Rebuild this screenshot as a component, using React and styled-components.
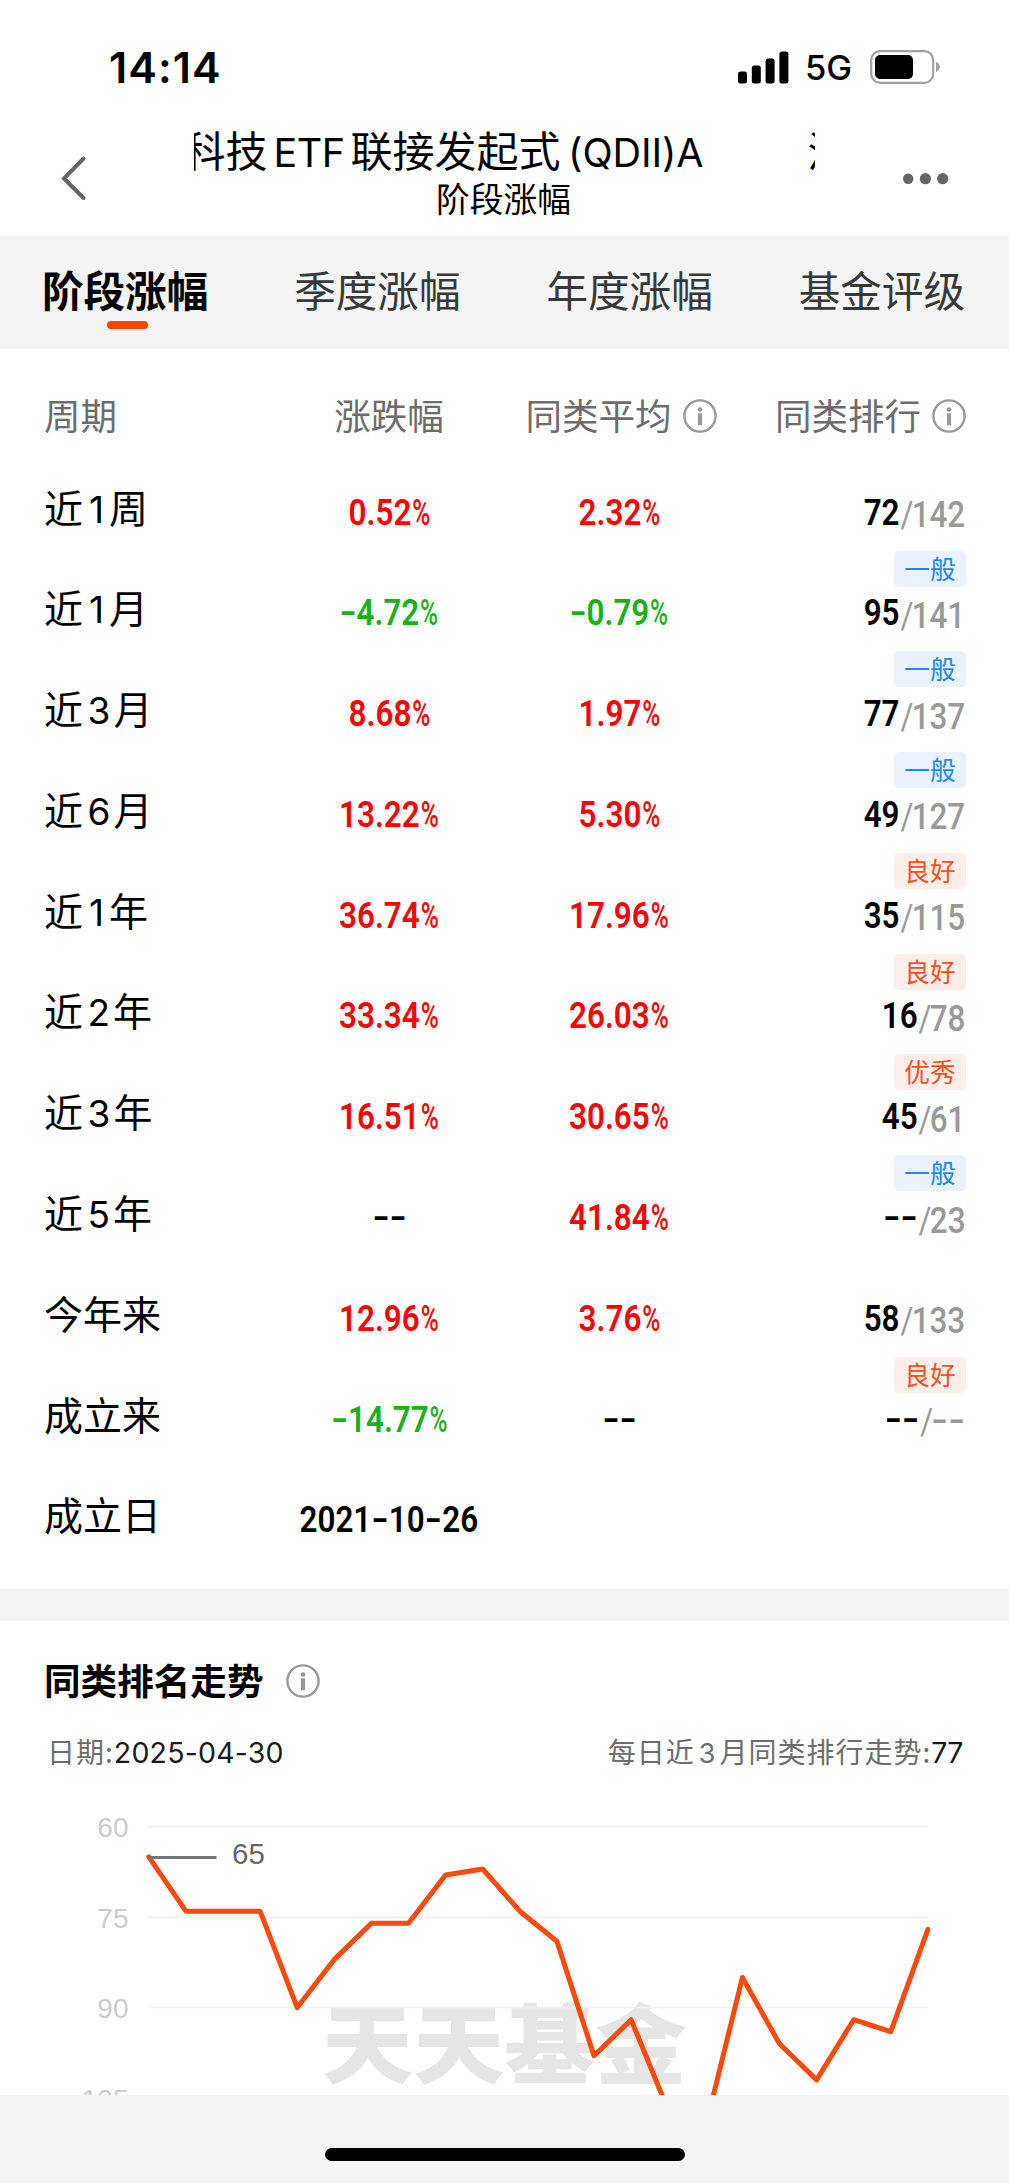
import React from "react";
import styled, { createGlobalStyle } from "styled-components";

const CJK = '"Noto Sans CJK SC", sans-serif';
const LATIN = 'Inter, "Noto Sans CJK SC", sans-serif';

const GlobalStyle = createGlobalStyle`
  * { box-sizing: border-box; }
  body { margin: 0; background: #fff; }
`;

const Screen = styled.div`
  display: flex;
  flex-direction: column;
  width: 1009px;
  height: 2183px;
  overflow: hidden;
  background: #fff;
  color: #000;
  font-family: ${CJK};
  white-space: nowrap;
`;

const StatusBar = styled.div`
  display: flex;
  flex: none;
  justify-content: space-between;
  align-items: center;
  height: 122px;
  padding: 12px 69px 0 109px;
`;

const Clock = styled.div`
  font: 600 43px/48px ${LATIN};
  letter-spacing: 1.1px;
`;

const StatusIcons = styled.div`
  display: flex;
  align-items: center;
`;

const Network = styled.span`
  margin: 2px 18px 0 16px;
  font: 500 34.5px/40px ${LATIN};
  letter-spacing: 0;
`;

const NavBar = styled.div`
  display: flex;
  flex: none;
  justify-content: space-between;
  height: 113.5px;
  padding: 0 60px 0 60px;
`;

const NavIcon = styled.svg`
  display: block;
  flex: none;
  margin-top: 32px;
`;

const Titles = styled.div`
  width: 621px;
  margin-left: 16px;
  display: flex;
  flex-direction: column;
  align-items: center;
`;

const Marquee = styled.div`
  display: flex;
  align-items: center;
  align-self: stretch;
  height: 54px;
  overflow: hidden;
  font-size: 42px;
  line-height: 54px;
`;

const MarqueeText = styled.span`
  flex: none;
  margin-left: ${(p) => p.$shift}px;
`;

const Latin = styled.span`
  font-family: Inter, sans-serif;
  font-size: ${(p) => p.$size}px;
  letter-spacing: ${(p) => p.$track || 0}px;
  margin: 0 ${(p) => p.$after || 0}px 0 ${(p) => p.$before || 0}px;
  line-height: 1;
`;

const Subtitle = styled.div`
  margin: 1px 2px 0 0;
  font-size: 33.7px;
  line-height: 42px;
`;

const Tabs = styled.nav`
  display: flex;
  flex: none;
  height: 113.5px;
  background: #f4f4f4;
`;

const Tab = styled.div`
  flex: 1;
  display: flex;
  flex-direction: column;
  align-items: center;
  padding: 25px 2px 0 0;
  font-size: 41.6px;
  line-height: 56px;
  font-weight: ${(p) => (p.$active ? 600 : 400)};
  color: ${(p) => (p.$active ? "#000" : "#383838")};
`;

const TabMark = styled.div`
  width: 41px;
  height: 8px;
  margin: 4px 0 0 4px;
  border-radius: 4px;
  background: #ff4400;
`;

const Table = styled.section`
  flex: none;
  height: 1240.3px;
  padding: 0 43px 0 44px;
`;

const Grid = styled.div`
  display: grid;
  grid-template-columns: 230px 230px 230px 1fr;
`;

const HeadRow = styled(Grid)`
  height: 106.5px;
  padding-top: 41px;
  font-size: 36.5px;
  line-height: 50px;
  color: #6c6c6c;
`;

const HeadCell = styled.div`
  display: flex;
  align-items: center;
  justify-content: ${(p) => p.$align || "center"};
  height: 50px;
  gap: 11px;
  padding-left: ${(p) => p.$inset || 0}px;
`;

const Row = styled(Grid)`
  height: 100.8px;
`;

const RowLabel = styled.div`
  font-size: 39px;
  line-height: 100.8px;
`;

const ValueCell = styled.div`
  display: flex;
  justify-content: center;
  padding-top: 37px;
`;

const TONES = { up: "#ff0000", down: "#1bb01b", none: "#000" };

const Figure = styled.span`
  display: inline-block;
  font: 600 36.5px/40px Roboto, sans-serif;
  color: ${(p) => TONES[p.$tone]};
  transform: scaleX(0.86);
`;

const Dash = styled.span`
  display: inline-block;
  margin: 0 3.5px;
  transform: scaleX(1.5) translateY(-1px);
`;

const Percent = styled.span`
  display: inline-block;
  margin: 0 -0.17em 0 1px;
  font-weight: 500;
  transform: scaleX(0.78);
  transform-origin: left;
`;

const RankCell = styled.div`
  display: flex;
  flex-direction: column;
  align-items: flex-end;
  padding-top: 37px;
`;

const Rank = styled.span`
  display: inline-block;
  font: 600 36.5px/40px Roboto, sans-serif;
  transform: scaleX(0.86);
  transform-origin: right;
  padding-right: 1px;
`;

const Total = styled.span`
  position: relative;
  top: 2.5px;
  font-weight: 500;
  color: #999;
`;

const Slash = styled.span`
  font-weight: 400;
  margin: 0 -2px 0 1px;
`;

const Tag = styled.span`
  width: 72px;
  height: 36px;
  margin-top: 18px;
  border-radius: 5px;
  font-size: 25.7px;
  line-height: 34px;
  text-align: center;
  color: ${(p) => (p.$cool ? "#1b89f3" : "#f4511e")};
  background: ${(p) => (p.$cool ? "#e9f2fe" : "#feeee9")};
`;

const Divider = styled.div`
  flex: none;
  height: 31.4px;
  background: #f4f4f4;
`;

const Trend = styled.section`
  flex: none;
  height: 474.3px;
  overflow: hidden;
`;

const TrendTitle = styled.div`
  display: flex;
  align-items: center;
  gap: 23px;
  padding: 32px 0 0 44px;
  font-size: 36.6px;
  line-height: 54px;
  font-weight: 600;
`;

const TrendMeta = styled.div`
  display: flex;
  justify-content: space-between;
  padding: 23.5px 46px 0 47px;
  font-size: 28px;
  line-height: 42px;
  letter-spacing: 1px;
  color: #6c6c6c;
`;

const Strong = styled.span`
  font: 400 28.5px/1 Inter, sans-serif;
  letter-spacing: ${(p) => p.$track || 0}px;
  color: #1a1a1a;
`;

const Chart = styled.svg`
  display: block;
`;

const Footer = styled.div`
  flex: 1;
  display: flex;
  justify-content: center;
  padding-top: 53.5px;
  background: #f4f4f4;
`;

const HomeBar = styled.div`
  width: 360px;
  height: 13px;
  border-radius: 7px;
  background: #000;
`;

const InfoSvg = styled.svg`
  display: block;
  flex: none;
  margin-top: 2px;
`;

function InfoIcon() {
  return (
    <InfoSvg width="34" height="34" viewBox="0 0 34 34" fill="none">
      <circle cx="17" cy="17" r="15.6" stroke="#999" strokeWidth="2.4" />
      <circle cx="17" cy="10.5" r="2.3" fill="#999" />
      <path d="M17 14.3V26.3" stroke="#999" strokeWidth="4.2" />
    </InfoSvg>
  );
}

const dashes = (text) =>
  text.split(/(-)/).filter(Boolean).map((part, i) => (part === "-" ? <Dash key={i}>-</Dash> : part));

function Value({ text }) {
  if (!text) return <ValueCell />;
  const percent = text.endsWith("%");
  const tone = !percent ? "none" : text[0] === "-" ? "down" : "up";
  return (
    <ValueCell>
      <Figure $tone={tone}>
        {dashes(percent ? text.slice(0, -1) : text)}
        {percent && <Percent>%</Percent>}
      </Figure>
    </ValueCell>
  );
}

function Label({ text }) {
  const m = text.match(/^(.)(\d)(.)$/);
  if (!m) return <RowLabel>{text}</RowLabel>;
  const narrow = m[2] === "1";
  return (
    <RowLabel>
      {m[1]}
      <Latin $size={37} $before={narrow ? 6 : 4.5} $after={narrow ? 5 : 3}>{m[2]}</Latin>
      {m[3]}
    </RowLabel>
  );
}

const ROWS = [
  ["近1周", "0.52%", "2.32%", "72", "142", "一般"],
  ["近1月", "-4.72%", "-0.79%", "95", "141", "一般"],
  ["近3月", "8.68%", "1.97%", "77", "137", "一般"],
  ["近6月", "13.22%", "5.30%", "49", "127", "良好"],
  ["近1年", "36.74%", "17.96%", "35", "115", "良好"],
  ["近2年", "33.34%", "26.03%", "16", "78", "优秀"],
  ["近3年", "16.51%", "30.65%", "45", "61", "一般"],
  ["近5年", "--", "41.84%", "--", "23"],
  ["今年来", "12.96%", "3.76%", "58", "133", "良好"],
  ["成立来", "-14.77%", "--", "--", "--"],
  ["成立日", "2021-10-26"],
];

const RANKS = [65, 74, 74, 74, 90, 82, 76, 76, 68, 67, 74, 79, 98, 92, 107, 110, 85, 96, 102, 92, 94, 77];
const TICKS = [60, 75, 90, 105];
const chartY = (v) => 54.8 + (v - 60) * 6.027;
const points = RANKS.map((v, i) => `${(148.8 + i * 37.1).toFixed(1)},${chartY(v).toFixed(1)}`).join(" ");

function TrendChart() {
  return (
    <Chart width="1009" height="330" viewBox="0 0 1009 330" fontFamily='"Liberation Sans", sans-serif' fontSize="28">
      <text
        transform="translate(322 304.5) scale(1.06 1)"
        fontFamily='"Noto Sans CJK SC", sans-serif'
        fontSize="86"
        fontWeight="900"
        fill="#e5e5e5"
      >
        天天基金
      </text>
      {TICKS.map((v) => (
        <g key={v}>
          <line x1="149" x2="928" y1={chartY(v)} y2={chartY(v)} stroke="#f1f1f1" strokeWidth="1.5" />
          <text x="128.5" y={chartY(v) + 10.5} textAnchor="end" fill="#ccc">{v}</text>
        </g>
      ))}
      <polyline points={points} fill="none" stroke="#ff4a08" strokeWidth="5" strokeLinecap="round" strokeLinejoin="round" />
      <line x1="149" x2="216.5" y1="85.5" y2="85.5" stroke="#777" strokeWidth="2.8" />
      <text x="232" y="91.5" fontSize="29.5" fill="#666">65</text>
    </Chart>
  );
}

export default function App() {
  return (
    <Screen>
      <GlobalStyle />
      <StatusBar>
        <Clock>14:14</Clock>
        <StatusIcons>
          <svg width="51" height="33" viewBox="0 0 51 33">
            <rect x="0" y="20.5" width="9" height="12" rx="2.5" />
            <rect x="13.8" y="14.5" width="9" height="18" rx="2.5" />
            <rect x="27.6" y="7.5" width="9" height="25" rx="2.5" />
            <rect x="41.4" y="0.5" width="9" height="32" rx="2.5" />
          </svg>
          <Network>5G</Network>
          <svg width="70" height="34" viewBox="0 0 70 34">
            <rect x="1.2" y="1.2" width="62" height="31.6" rx="9" fill="none" stroke="#a0a0a0" strokeWidth="2.2" />
            <rect x="5" y="5" width="38" height="24" rx="5" />
            <path d="M66 12c5 1.5 5 8.500 0 10z" fill="#a0a0a0" />
          </svg>
        </StatusIcons>
      </StatusBar>
      <NavBar>
        <NavIcon width="30" height="50" viewBox="0 0 30 50" fill="none">
          <path d="M23.500 4.500L4 24.500L23.500 44" stroke="#666" strokeWidth="4" strokeLinecap="round" />
        </NavIcon>
        <Titles>
          <Marquee>
            <MarqueeText $shift={-10.5}>
              科技
              <Latin $size={39.5} $track={-0.5} $before={6} $after={6}>ETF</Latin>
              联接发起式
              <Latin $size={39.5} $track={-0.1} $before={7.5}>(QDII)A</Latin>
            </MarqueeText>
            <MarqueeText $shift={104}>汇添富</MarqueeText>
          </Marquee>
          <Subtitle>阶段涨幅</Subtitle>
        </Titles>
        <NavIcon width="46" height="50" viewBox="0 0 46 50" fill="#666">
          <circle cx="5.200" cy="24.700" r="5.200" />
          <circle cx="22.400" cy="24.700" r="5.600" />
          <circle cx="39.700" cy="24.700" r="5.600" />
        </NavIcon>
      </NavBar>
      <Tabs>
        <Tab $active>
          阶段涨幅
          <TabMark />
        </Tab>
        <Tab>季度涨幅</Tab>
        <Tab>年度涨幅</Tab>
        <Tab>基金评级</Tab>
      </Tabs>
      <Table>
        <HeadRow>
          <HeadCell $align="flex-start">周期</HeadCell>
          <HeadCell>涨跌幅</HeadCell>
          <HeadCell $inset={4}>同类平均<InfoIcon /></HeadCell>
          <HeadCell $align="flex-end">同类排行<InfoIcon /></HeadCell>
        </HeadRow>
        {ROWS.map(([label, change, average, rank, total, tag]) => (
          <Row key={label}>
            <Label text={label} />
            <Value text={change} />
            <Value text={average} />
            {rank && (
              <RankCell>
                <Rank>
                  {dashes(rank)}
                  <Total><Slash>/</Slash>{dashes(total)}</Total>
                </Rank>
                {tag && <Tag $cool={tag === "一般"}>{tag}</Tag>}
              </RankCell>
            )}
          </Row>
        ))}
      </Table>
      <Divider />
      <Trend>
        <TrendTitle>同类排名走势<InfoIcon /></TrendTitle>
        <TrendMeta>
          <span>日期:<Strong $track={0.2}>2025-04-30</Strong></span>
          <span>
            每日近<Latin $size={27} $before={4} $after={4}>3</Latin>月同类排行走势:<Strong $track={-0.5}>77</Strong>
          </span>
        </TrendMeta>
        <TrendChart />
      </Trend>
      <Footer>
        <HomeBar />
      </Footer>
    </Screen>
  );
}
